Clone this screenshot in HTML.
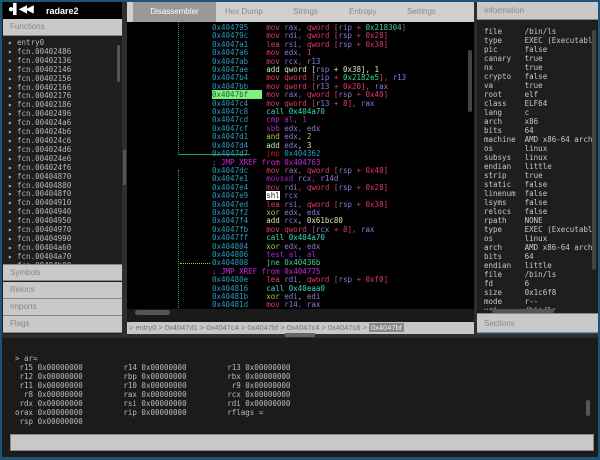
<!DOCTYPE html>
<html><head><meta charset="utf-8"><style>
*{margin:0;padding:0;box-sizing:border-box}
body{width:600px;height:460px;background:#1d5478;position:relative;overflow:hidden;font-family:"Liberation Sans",sans-serif}
.abs{position:absolute}
pre{font-family:"DejaVu Sans Mono","Liberation Mono",monospace;font-size:7.5px;line-height:8.4px;margin:0}
.hdr{background:#c9c9c9;color:#888;font-size:8px;padding-left:7px;line-height:16px;border-bottom:1px solid #888}
.a{color:#2a9cc0}.m{color:#e03a68}.r{color:#8c7ad8}.n{color:#40d090}.ad{color:#d8e8b0}.c{color:#40d8b8}.p{color:#a828c8}.y{color:#b0c830}.j{color:#c01818}.x{color:#c828d8}.g{color:#a8c848}
</style></head><body>
<!-- left panel -->
<div class="abs" style="left:2px;top:2px;width:120px;height:331px;background:#1e1e1e"></div>
<div class="abs" style="left:3px;top:2px;width:120px;height:17px;background:#000"></div>
<div class="abs" style="left:8px;top:4px;color:#fff;font-size:10px;font-weight:bold;letter-spacing:-1px">●▌◀◀</div>
<div class="abs" style="left:46px;top:6px;color:#fff;font-size:9px;font-weight:bold">radare2</div>
<div class="abs hdr" style="left:3px;top:19px;width:119px;height:17px">Functions</div>
<pre class="abs" style="left:8px;top:39px;color:#b8b8b8;line-height:8.9px;height:225px;overflow:hidden">▸ entry0
▸ fcn.00402486
▸ fcn.00402136
▸ fcn.00402146
▸ fcn.00402156
▸ fcn.00402166
▸ fcn.00402176
▸ fcn.00402186
▸ fcn.00402496
▸ fcn.004024a6
▸ fcn.004024b6
▸ fcn.004024c6
▸ fcn.004024d6
▸ fcn.004024e6
▸ fcn.004024f6
▸ fcn.00404870
▸ fcn.00404880
▸ fcn.004048f0
▸ fcn.00404910
▸ fcn.00404940
▸ fcn.00404950
▸ fcn.00404970
▸ fcn.00404990
▸ fcn.00404a60
▸ fcn.00404a70
▸ fcn.00404b00</pre>
<div class="abs" style="left:117px;top:45px;width:3px;height:37px;background:#555;border-radius:2px"></div>
<div class="abs" style="left:2px;top:264px;width:120px;height:70px;background:#1e1e1e"></div>
<div class="abs hdr" style="left:3px;top:264px;width:119px;height:17px;border-top:1px solid #888">Symbols</div>
<div class="abs hdr" style="left:3px;top:282px;width:119px;height:17px">Relocs</div>
<div class="abs hdr" style="left:3px;top:299px;width:119px;height:17px">Imports</div>
<div class="abs hdr" style="left:3px;top:316px;width:119px;height:17px">Flags</div>
<!-- gap -->
<div class="abs" style="left:122px;top:2px;width:5px;height:332px;background:#2e2e2e"></div>
<div class="abs" style="left:123px;top:150px;width:3px;height:35px;background:#555"></div>
<!-- center -->
<div class="abs" style="left:127px;top:2px;width:347px;height:20px;background:#d0d0d0"></div>
<div class="abs" style="left:133px;top:2px;width:83px;height:20px;background:#999;color:#fff;font-size:8px;text-align:center;line-height:20px">Disassembler</div>
<div class="abs" style="left:225px;top:7px;color:#888;font-size:8px;width:250px;height:14px">
<span class="abs" style="left:0">Hex Dump</span><span class="abs" style="left:68px">Strings</span><span class="abs" style="left:124px">Entropy</span><span class="abs" style="left:182px">Settings</span></div>
<div class="abs" style="left:127px;top:22px;width:347px;height:296px;background:#000"></div>
<div class="abs" style="left:178px;top:22px;width:0;height:133px;border-left:1px dotted #1fa070"></div>
<div class="abs" style="left:178px;top:154px;width:72px;height:0;border-top:1px solid #1fa070"></div>
<div class="abs" style="left:178px;top:170px;width:0;height:148px;border-left:1px dotted #20a050"></div>
<div class="abs" style="left:180px;top:263px;width:30px;height:0;border-top:1px dotted #c0c020"></div>
<pre class="abs" style="left:212px;top:24px"><span class="a">0x404795</span>    <span class="m">mov <span class="r">rax</span>, qword [<span class="r">rip</span> + <span class="n">0x218304</span>]</span>
<span class="a">0x40479c</span>    <span class="m">mov <span class="r">rdi</span>, qword [<span class="r">rsp</span> + 0x28]</span>
<span class="a">0x4047a1</span>    <span class="m">lea <span class="r">rsi</span>, qword [<span class="r">rsp</span> + 0x38]</span>
<span class="a">0x4047a6</span>    <span class="m">mov <span class="r">edx</span>, 1</span>
<span class="a">0x4047ab</span>    <span class="m">mov <span class="r">rcx</span>, <span class="r">r13</span></span>
<span class="a">0x4047ae</span>    <span class="ad">add qword [<span class="r">rsp</span> + 0x38], 1</span>
<span class="a">0x4047b4</span>    <span class="m">mov qword [<span class="r">rip</span> + <span class="n">0x2182e5</span>], <span class="r">r13</span></span>
<span class="a">0x4047bb</span>    <span class="m">mov qword [<span class="r">r13</span> + 0x20], <span class="r">rax</span></span>
<span style="color:#1a6a40;background:#7ef07e">0x4047bf   </span> <span class="m">mov <span class="r">rax</span>, qword [<span class="r">rsp</span> + 0x40]</span>
<span class="a">0x4047c4</span>    <span class="m">mov qword [<span class="r">r13</span> + 8], <span class="r">rax</span></span>
<span class="a">0x4047c8</span>    <span class="c">call 0x404a70</span>
<span class="a">0x4047cd</span>    <span class="p">cmp al, 1</span>
<span class="a">0x4047cf</span>    <span class="p">sbb <span class="r">edx</span>, <span class="r">edx</span></span>
<span class="a">0x4047d1</span>    <span class="y">and <span class="r">edx</span>, 2</span>
<span class="a">0x4047d4</span>    <span class="ad">add <span class="r">edx</span>, 3</span>
<span class="a">0x4047d7</span>    <span class="j">jmp</span> <span class="a">0x404362</span>
<span class="x">; JMP XREF from 0x404763</span>
<span class="a">0x4047dc</span>    <span class="m">mov <span class="r">rax</span>, qword [<span class="r">rsp</span> + 0x40]</span>
<span class="a">0x4047e1</span>    <span class="p">movsxd <span class="r">rcx</span>, <span class="r">r14d</span></span>
<span class="a">0x4047e4</span>    <span class="m">mov <span class="r">rdi</span>, qword [<span class="r">rsp</span> + 0x28]</span>
<span class="a">0x4047e9</span>    <span style="background:#fff;color:#222">shl</span> <span class="r">rcx</span>
<span class="a">0x4047ed</span>    <span class="m">lea <span class="r">rsi</span>, qword [<span class="r">rsp</span> + 0x38]</span>
<span class="a">0x4047f2</span>    <span class="g">xor <span class="r">edx</span>, <span class="r">edx</span></span>
<span class="a">0x4047f4</span>    <span class="ad">add <span class="r">rcx</span>, 0x61bc80</span>
<span class="a">0x4047fb</span>    <span class="m">mov qword [<span class="r">rcx</span> + 8], <span class="r">rax</span></span>
<span class="a">0x4047ff</span>    <span class="c">call 0x404a70</span>
<span class="a">0x404804</span>    <span class="g">xor <span class="r">edx</span>, <span class="r">edx</span></span>
<span class="a">0x404806</span>    <span class="p">test al, al</span>
<span class="a">0x404808</span>    <span class="n">jne 0x40436b</span>
<span class="x">; JMP XREF from 0x404775</span>
<span class="a">0x40480e</span>    <span class="m">lea <span class="r">rdi</span>, qword [<span class="r">rsp</span> + 0xf0]</span>
<span class="a">0x404816</span>    <span class="c">call 0x40eaa0</span>
<span class="a">0x40481b</span>    <span class="g">xor <span class="r">edi</span>, <span class="r">edi</span></span>
<span class="a">0x40481d</span>    <span class="m">mov <span class="r">r14</span>, <span class="r">rax</span></span></pre>
<div class="abs" style="left:468px;top:50px;width:4px;height:62px;background:#444;border-radius:2px"></div>
<div class="abs" style="left:127px;top:309px;width:347px;height:14px;background:#1a1a1a"></div>
<div class="abs" style="left:135px;top:310px;width:35px;height:5px;background:#555;border-radius:3px"></div>
<div class="abs" style="left:127px;top:322px;width:347px;height:12px;background:#c8c8c8;color:#777;font-size:7.5px;line-height:12px;padding-left:2px;white-space:nowrap">&gt; entry0 &gt; 0x4047d1 &gt; 0x4047c4 &gt; 0x4047bf &gt; 0x4047c4 &gt; 0x4047c8 &gt; <span style="background:#888;color:#eee;padding:0 2px">0x4047bf</span></div>
<!-- right gap -->
<div class="abs" style="left:474px;top:2px;width:3px;height:332px;background:#2e2e2e"></div>
<!-- right panel -->
<div class="abs" style="left:477px;top:2px;width:121px;height:331px;background:#1e1e1e"></div>
<div class="abs hdr" style="left:477px;top:2px;width:121px;height:18px;line-height:17px">Information</div>
<pre class="abs" style="left:484px;top:27px;color:#c8c8c8;line-height:9px;width:108px;overflow:hidden;height:283px">file     /bin/ls
type     EXEC (Executable
pic      false
canary   true
nx       true
crypto   false
va       true
root     elf
class    ELF64
lang     c
arch     x86
bits     64
machine  AMD x86-64 arch
os       linux
subsys   linux
endian   little
strip    true
static   false
linenum  false
lsyms    false
relocs   false
rpath    NONE
type     EXEC (Executable
os       linux
arch     AMD x86-64 arch
bits     64
endian   little
file     /bin/ls
fd       6
size     0x1c6f8
mode     r--
uri      /bin/ls</pre>
<div class="abs" style="left:592px;top:30px;width:4px;height:240px;background:#444;border-radius:2px"></div>
<div class="abs" style="left:492px;top:309px;width:62px;height:4px;background:#555;border-radius:2px"></div>
<div class="abs hdr" style="left:477px;top:313px;width:121px;height:20px;line-height:20px;border-top:1px solid #888">Sections</div>
<!-- bottom -->
<div class="abs" style="left:2px;top:334px;width:596px;height:4px;background:#2e2e2e"></div>
<div class="abs" style="left:285px;top:333px;width:30px;height:4px;background:#666"></div>
<div class="abs" style="left:2px;top:338px;width:596px;height:119px;background:#1b1b1b"></div>
<pre class="abs" style="left:15px;top:354px;color:#bbb;line-height:9px;font-size:7.5px">&gt; ar=
 r15 0x00000000         r14 0x00000000         r13 0x00000000
 r12 0x00000000         rbp 0x00000000         rbx 0x00000000
 r11 0x00000000         r10 0x00000000          r9 0x00000000
  r8 0x00000000         rax 0x00000000         rcx 0x00000000
 rdx 0x00000000         rsi 0x00000000         rdi 0x00000000
orax 0x00000000         rip 0x00000000         rflags =
 rsp 0x00000000</pre>
<div class="abs" style="left:586px;top:400px;width:4px;height:16px;background:#555;border-radius:2px"></div>
<div class="abs" style="left:10px;top:434px;width:584px;height:17px;background:#c8c8c8;border:1px solid #888"></div>
</body></html>
